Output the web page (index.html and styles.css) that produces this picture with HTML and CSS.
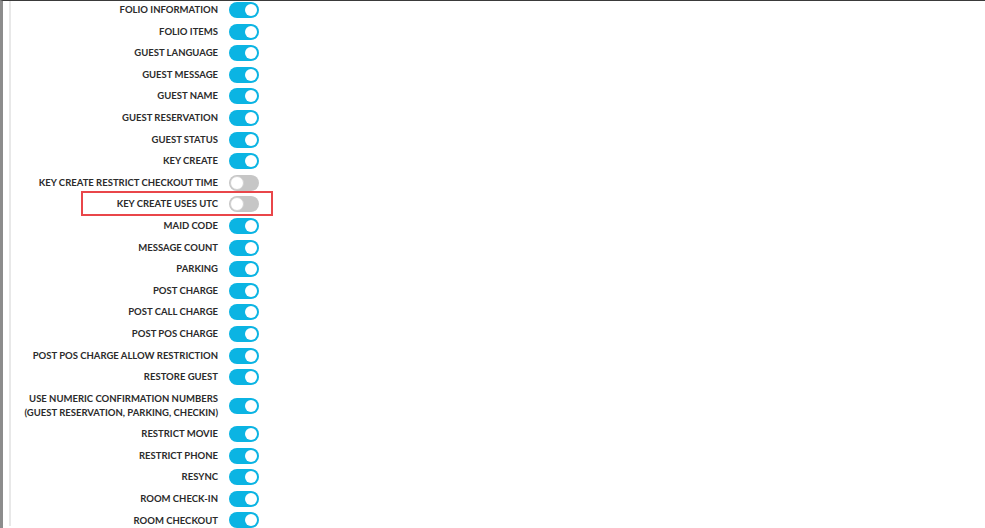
FILE: index.html
```html
<!DOCTYPE html>
<html lang="en">
<head>
<meta charset="utf-8">
<title>Settings</title>
<link rel="stylesheet" href="styles.css">
</head>
<body>
<div class="frame">
  <div class="panel">
    <ul class="list">
      <li class="row"><span class="label">FOLIO INFORMATION</span><span class="toggle on"></span></li>
      <li class="row"><span class="label">FOLIO ITEMS</span><span class="toggle on"></span></li>
      <li class="row"><span class="label">GUEST LANGUAGE</span><span class="toggle on"></span></li>
      <li class="row"><span class="label">GUEST MESSAGE</span><span class="toggle on"></span></li>
      <li class="row"><span class="label">GUEST NAME</span><span class="toggle on"></span></li>
      <li class="row"><span class="label">GUEST RESERVATION</span><span class="toggle on"></span></li>
      <li class="row"><span class="label">GUEST STATUS</span><span class="toggle on"></span></li>
      <li class="row"><span class="label">KEY CREATE</span><span class="toggle on"></span></li>
      <li class="row"><span class="label">KEY CREATE RESTRICT CHECKOUT TIME</span><span class="toggle off"></span></li>
      <li class="row highlight"><span class="label">KEY CREATE USES UTC</span><span class="toggle off"></span></li>
      <li class="row"><span class="label">MAID CODE</span><span class="toggle on"></span></li>
      <li class="row"><span class="label">MESSAGE COUNT</span><span class="toggle on"></span></li>
      <li class="row"><span class="label">PARKING</span><span class="toggle on"></span></li>
      <li class="row"><span class="label">POST CHARGE</span><span class="toggle on"></span></li>
      <li class="row"><span class="label">POST CALL CHARGE</span><span class="toggle on"></span></li>
      <li class="row"><span class="label">POST POS CHARGE</span><span class="toggle on"></span></li>
      <li class="row"><span class="label">POST POS CHARGE ALLOW RESTRICTION</span><span class="toggle on"></span></li>
      <li class="row"><span class="label">RESTORE GUEST</span><span class="toggle on"></span></li>
      <li class="row tall"><span class="label">USE NUMERIC CONFIRMATION NUMBERS<br>(GUEST RESERVATION, PARKING, CHECKIN)</span><span class="toggle on"></span></li>
      <li class="row"><span class="label">RESTRICT MOVIE</span><span class="toggle on"></span></li>
      <li class="row"><span class="label">RESTRICT PHONE</span><span class="toggle on"></span></li>
      <li class="row"><span class="label">RESYNC</span><span class="toggle on"></span></li>
      <li class="row"><span class="label">ROOM CHECK-IN</span><span class="toggle on"></span></li>
      <li class="row"><span class="label">ROOM CHECKOUT</span><span class="toggle on"></span></li>
    </ul>
  </div>
</div>
</body>
</html>
```

FILE: styles.css
```css
html, body {
  margin: 0;
  padding: 0;
  background: #ffffff;
  overflow: hidden;
}

body {
  font-family: Lato, "Open Sans", Arial, sans-serif;
}

.frame {
  height: 528px;
  box-sizing: border-box;
  border-left: 3px solid #8c8c8c;
  border-top: 1px solid #3a3a3a;
  padding-left: 6px;
  overflow: hidden;
}

.panel {
  height: 100%;
  border-left: 2px solid #e8e8e8;
  padding-left: 7px;
}

.list {
  list-style: none;
  margin: -1.8px 0 0 0;
  padding: 0;
  font-size: 9.5px;
  line-height: 13.8px;
}

.row {
  position: relative;
  display: flex;
  align-items: center;
  height: 21.6px;
  box-sizing: border-box;
}

.row.tall {
  height: 35.4px;
}

.label {
  width: 200px;
  text-align: right;
  font-size: 9.5px;
  font-weight: 700;
  line-height: 13.8px;
  color: #2b2b2b;
}

.toggle {
  position: relative;
  flex: none;
  width: 30px;
  height: 16px;
  margin-left: 11px;
  border-radius: 8px;
  box-sizing: border-box;
}

.toggle::after {
  content: "";
  position: absolute;
  top: 2px;
  width: 12px;
  height: 12px;
  border-radius: 50%;
  background: #ffffff;
  box-sizing: border-box;
}

.toggle.on {
  background: #0bb4e3;
}

.toggle.on::after {
  right: 2px;
}

.toggle.off {
  background: #c6c6c6;
}

.toggle.off::after {
  left: 1px;
  top: 1px;
  width: 14px;
  height: 14px;
  border: 1px solid #d2d2d2;
}

.highlight::before {
  content: "";
  position: absolute;
  left: 63px;
  top: -2.6px;
  width: 192px;
  height: 25px;
  border: 2px solid #e9464a;
  box-sizing: border-box;
}
```
